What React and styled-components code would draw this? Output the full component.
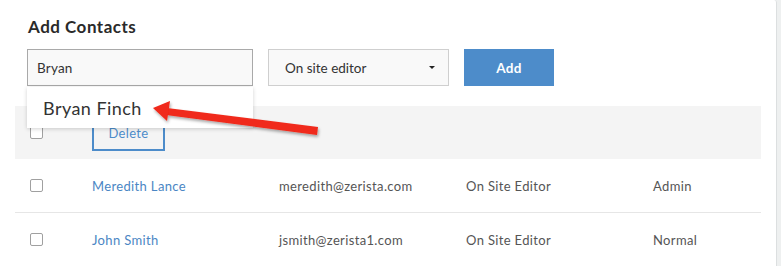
import React from 'react';
import styled, { createGlobalStyle } from 'styled-components';

const GlobalStyle = createGlobalStyle`
  body {
    margin: 0;
    background: #eef0f0;
    font-family: "Lato", "Liberation Sans", Arial, sans-serif;
  }
`;

const Page = styled.div`
  display: flex;
  height: 266px;
  overflow: hidden;
`;

const Card = styled.div`
  position: relative;
  width: 777px;
  height: 266px;
  background: #fff;
  border-right: 1px solid #dcdfe0;
  border-top-right-radius: 3px;
  box-sizing: border-box;
`;

const Title = styled.h2`
  margin: 0;
  padding: 16px 0 0 28px;
  font-size: 17px;
  line-height: 22px;
  font-weight: 700;
  letter-spacing: 0.5px;
  color: #2a2a2a;
`;

const FormRow = styled.div`
  display: flex;
  gap: 15px;
  padding: 11px 0 0 27px;
`;

const InputWrap = styled.div`
  position: relative;
`;

const Input = styled.div`
  width: 226px;
  height: 37px;
  box-sizing: border-box;
  border: 1px solid #a9a9a9;
  background: #f9f9f9;
  padding: 0 9px;
  display: flex;
  align-items: center;
  font-size: 13.5px;
  letter-spacing: 0.2px;
  color: #333;
`;

const Suggestions = styled.div`
  position: absolute;
  top: 38px;
  left: 0;
  width: 226px;
  height: 41px;
  background: #fff;
  box-shadow: 0 1px 4px rgba(0, 0, 0, 0.18);
  z-index: 5;
  display: flex;
  align-items: center;
  padding-left: 16px;
  box-sizing: border-box;
  font-size: 18px;
  letter-spacing: 0.45px;
  color: #333;
`;

const Select = styled.div`
  width: 181px;
  height: 37px;
  box-sizing: border-box;
  border: 1px solid #cfcfcf;
  background: #f9f9f9;
  padding: 0 13px 0 16px;
  display: flex;
  align-items: center;
  justify-content: space-between;
  font-size: 13.5px;
  color: #333;
`;

const Caret = styled.span`
  width: 0;
  height: 0;
  border-left: 3px solid transparent;
  border-right: 3px solid transparent;
  border-top: 3px solid #222;
`;

const AddButton = styled.button`
  width: 90px;
  height: 37px;
  border: none;
  background: #4d8cca;
  color: #fff;
  font-family: inherit;
  font-size: 13.5px;
  font-weight: 700;
  letter-spacing: 0.3px;
`;

const Table = styled.div`
  margin: 20px 15px 0 15px;
`;

const Row = styled.div`
  display: grid;
  grid-template-columns: 62px 187px 187px 187px 1fr;
  align-items: center;
  height: 53px;
  padding-left: 15px;
  background: ${(p) => (p.$head ? '#f4f4f4' : '#fff')};
  border-bottom: ${(p) => (p.$head || p.$last ? 'none' : '1px solid #e6e6e6')};
  font-size: 13px;
  letter-spacing: 0.35px;
  color: #555;
`;

const Check = styled.span`
  width: 11px;
  height: 11px;
  border: 1px solid #a0a0a0;
  border-radius: 2px;
  background: #fff;
`;

const DeleteButton = styled.span`
  width: 73px;
  height: 36px;
  box-sizing: border-box;
  border: 2px solid #4d8cca;
  display: flex;
  align-items: center;
  justify-content: center;
  color: #4d8cca;
  font-size: 13px;
`;

const NameLink = styled.a`
  color: #4a86c4;
  text-decoration: none;
`;

const Arrow = styled.svg`
  position: absolute;
  left: 140px;
  top: 95px;
  z-index: 6;
  overflow: visible;
`;

const contacts = [
  { name: 'Meredith Lance', email: 'meredith@zerista.com', role: 'On Site Editor', type: 'Admin' },
  { name: 'John Smith', email: 'jsmith@zerista1.com', role: 'On Site Editor', type: 'Normal' },
];

export default function App() {
  return (
    <Page>
      <GlobalStyle />
      <Card>
        <Title>Add Contacts</Title>
        <FormRow>
          <InputWrap>
            <Input>Bryan</Input>
            <Suggestions>Bryan Finch</Suggestions>
          </InputWrap>
          <Select>
            On site editor
            <Caret />
          </Select>
          <AddButton>Add</AddButton>
        </FormRow>
        <Table>
          <Row $head>
            <Check />
            <DeleteButton>Delete</DeleteButton>
          </Row>
          {contacts.map((c, i) => (
            <Row key={c.email} $last={i === contacts.length - 1}>
              <Check />
              <NameLink>{c.name}</NameLink>
              <span>{c.email}</span>
              <span>{c.role}</span>
              <span>{c.type}</span>
            </Row>
          ))}
        </Table>
        <Arrow width="190" height="50" viewBox="0 0 190 50">
          <defs>
            <filter id="sh" x="-10%" y="-30%" width="120%" height="160%">
              <feDropShadow dx="1" dy="2" stdDeviation="1.5" floodColor="#000" floodOpacity="0.35" />
            </filter>
          </defs>
          <g filter="url(#sh)" fill="#f0291a">
            <polygon points="27,13 178,32 177,40 26,20" />
            <polygon points="13,13 30,6 27,26" />
          </g>
        </Arrow>
      </Card>
    </Page>
  );
}
